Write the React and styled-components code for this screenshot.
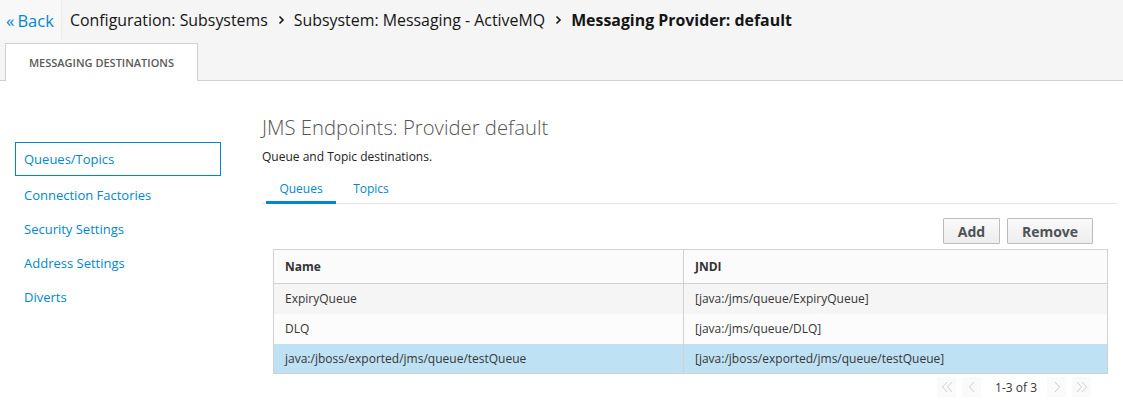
import React from 'react';
import styled, { createGlobalStyle } from 'styled-components';

const GlobalStyle = createGlobalStyle`
  html, body {
    margin: 0;
    padding: 0;
    background: #fff;
    font-family: "Open Sans", "Noto Sans", sans-serif;
    color: #363636;
  }
  * { box-sizing: border-box; }
`;

const Header = styled.div`
  background: #f5f5f5;
  border-bottom: 1px solid #d1d1d1;
  height: 81px;
  display: flex;
  flex-direction: column;
`;

const Crumbs = styled.div`
  display: flex;
  align-items: center;
  height: 40px;
`;

const BackLink = styled.a`
  display: flex;
  align-items: center;
  height: 40px;
  width: 62px;
  padding-left: 6px;
  margin-right: 8px;
  background: #f8f8f8;
  border-right: 1px solid #ececec;
  color: #0088ce;
  font-size: 16.5px;
  text-decoration: none;
  cursor: pointer;
  span { margin-right: 3px; font-size: 17px; }
`;

const Crumb = styled.span`
  font-size: 15.9px;
  color: #151515;
  font-weight: ${p => (p.current ? 700 : 400)};
`;

const Sep = styled.span`
  display: flex;
  margin: 0 9px 0 10px;
  svg { display: block; }
`;

const TabBar = styled.div`
  display: flex;
  padding-left: 5px;
  margin-top: 3px;
`;

const PageTab = styled.div`
  height: 38px;
  margin-bottom: -1px;
  width: 193px;
  background: #fff;
  border: 1px solid #d1d1d1;
  border-bottom: none;
  display: flex;
  align-items: center;
  justify-content: center;
  font-size: 11px;
  font-weight: 600;
  color: #5a5a5a;
  text-transform: uppercase;
`;

const Body = styled.div`
  display: flex;
  padding-top: 34px;
`;

const Sidebar = styled.nav`
  width: 262px;
  padding: 27px 41px 0 15px;
  display: flex;
  flex-direction: column;
`;

const NavItem = styled.a`
  height: 34px;
  display: flex;
  align-items: center;
  padding-left: 8px;
  margin-bottom: ${p => (p.active ? 2 : 0)}px;
  font-size: 13px;
  color: #0088ce;
  border: 1px solid ${p => (p.active ? '#0088ce' : 'transparent')};
  cursor: pointer;
`;

const Main = styled.div`
  flex: 1;
  padding-right: 6px;
`;

const Title = styled.h1`
  margin: 0;
  font-size: 20.3px;
  font-weight: 300;
  color: #555;
  line-height: 24px;
`;

const Desc = styled.p`
  margin: 9px 0 0;
  font-size: 12px;
  color: #222;
  line-height: 17px;
`;

const SubTabs = styled.div`
  display: flex;
  margin-top: 13px;
  padding-left: 4px;
  border-bottom: 1px solid #e5e5e5;
`;

const SubTab = styled.div`
  font-size: 12px;
  color: #0088ce;
  padding: 2px 0 0;
  height: 26px;
  width: ${p => p.w}px;
  text-align: center;
  border-bottom: 3px solid ${p => (p.active ? '#0088ce' : 'transparent')};
  margin-bottom: -1px;
  cursor: pointer;
`;

const Toolbar = styled.div`
  display: flex;
  justify-content: flex-end;
  gap: 7px;
  padding: 14px 24px 5px 0;
`;

const Button = styled.button`
  height: 26px;
  width: ${p => p.w}px;
  padding: 0;
  font-family: inherit;
  font-size: 14px;
  font-weight: 700;
  color: #4d5258;
  background: linear-gradient(#fafafa, #ededed);
  border: 1px solid #bbb;
  border-radius: 1px;
  cursor: pointer;
`;

const Table = styled.table`
  margin-left: 11px;
  width: 835px;
  border-collapse: collapse;
  border: 1px solid #d1d1d1;
  font-size: 12px;
`;

const Th = styled.th`
  text-align: left;
  font-weight: 700;
  height: 34px;
  padding: 0 11px;
  background: #fbfbfb;
  color: #333;
  border-right: 1px solid #d1d1d1;
  border-bottom: 1px solid #d1d1d1;
  width: ${p => p.w || 'auto'};
`;

const Row = styled.tr`
  background: ${p => (p.selected ? '#bee1f4' : p.odd ? '#f5f5f5' : '#fcfcfc')};
`;

const Td = styled.td`
  height: 30px;
  padding: 0 11px;
  color: #363636;
  border-right: 1px solid #d1d1d1;
`;

const Pager = styled.div`
  display: flex;
  justify-content: flex-end;
  align-items: center;
  gap: 6px;
  padding: 3px 26px 0 0;
  font-size: 12px;
  color: #363636;
`;

const PageBtn = styled.span`
  width: 19px;
  height: 20px;
  display: flex;
  align-items: center;
  justify-content: center;
  background: #fafafa;
  svg { display: block; }
`;

const PageText = styled.span`
  margin: 0 4px 0 8px;
`;

const Chevron = ({ double, right }) => (
  <svg width="14" height="14" viewBox="0 0 14 14" fill="none" stroke="#cfcfcf" strokeWidth="1">
    <g transform={right ? 'translate(14,0) scale(-1,1)' : undefined}>
      {double ? (
        <>
          <polyline points="7,2 2.5,7 7,12" />
          <polyline points="12,2 7.5,7 12,12" />
        </>
      ) : (
        <polyline points="9,2 4.5,7 9,12" />
      )}
    </g>
  </svg>
);

const CrumbArrow = () => (
  <svg width="7" height="10" viewBox="0 0 7 10" fill="none" stroke="#151515" strokeWidth="1.6">
    <polyline points="1.5,1.5 5,5 1.5,8.5" />
  </svg>
);

const rows = [
  { name: 'ExpiryQueue', jndi: '[java:/jms/queue/ExpiryQueue]' },
  { name: 'DLQ', jndi: '[java:/jms/queue/DLQ]' },
  { name: 'java:/jboss/exported/jms/queue/testQueue', jndi: '[java:/jboss/exported/jms/queue/testQueue]', selected: true },
];

const navItems = ['Queues/Topics', 'Connection Factories', 'Security Settings', 'Address Settings', 'Diverts'];

export default function App() {
  return (
    <>
      <GlobalStyle />
      <Header>
        <Crumbs>
          <BackLink><span>«</span>Back</BackLink>
          <Crumb>Configuration: Subsystems</Crumb>
          <Sep><CrumbArrow /></Sep>
          <Crumb>Subsystem: Messaging - ActiveMQ</Crumb>
          <Sep><CrumbArrow /></Sep>
          <Crumb current>Messaging Provider: default</Crumb>
        </Crumbs>
        <TabBar>
          <PageTab>Messaging Destinations</PageTab>
        </TabBar>
      </Header>
      <Body>
        <Sidebar>
          {navItems.map((item, i) => (
            <NavItem key={item} active={i === 0}>{item}</NavItem>
          ))}
        </Sidebar>
        <Main>
          <Title>JMS Endpoints: Provider default</Title>
          <Desc>Queue and Topic destinations.</Desc>
          <SubTabs>
            <SubTab active w={70}>Queues</SubTab>
            <SubTab w={70}>Topics</SubTab>
          </SubTabs>
          <Toolbar>
            <Button w={57}>Add</Button>
            <Button w={86}>Remove</Button>
          </Toolbar>
          <Table>
            <thead>
              <tr>
                <Th w="410px">Name</Th>
                <Th>JNDI</Th>
              </tr>
            </thead>
            <tbody>
              {rows.map((r, i) => (
                <Row key={r.name} odd={i % 2 === 0} selected={r.selected}>
                  <Td>{r.name}</Td>
                  <Td>{r.jndi}</Td>
                </Row>
              ))}
            </tbody>
          </Table>
          <Pager>
            <PageBtn><Chevron double /></PageBtn>
            <PageBtn><Chevron /></PageBtn>
            <PageText>1-3 of 3</PageText>
            <PageBtn><Chevron right /></PageBtn>
            <PageBtn><Chevron double right /></PageBtn>
          </Pager>
        </Main>
      </Body>
    </>
  );
}
